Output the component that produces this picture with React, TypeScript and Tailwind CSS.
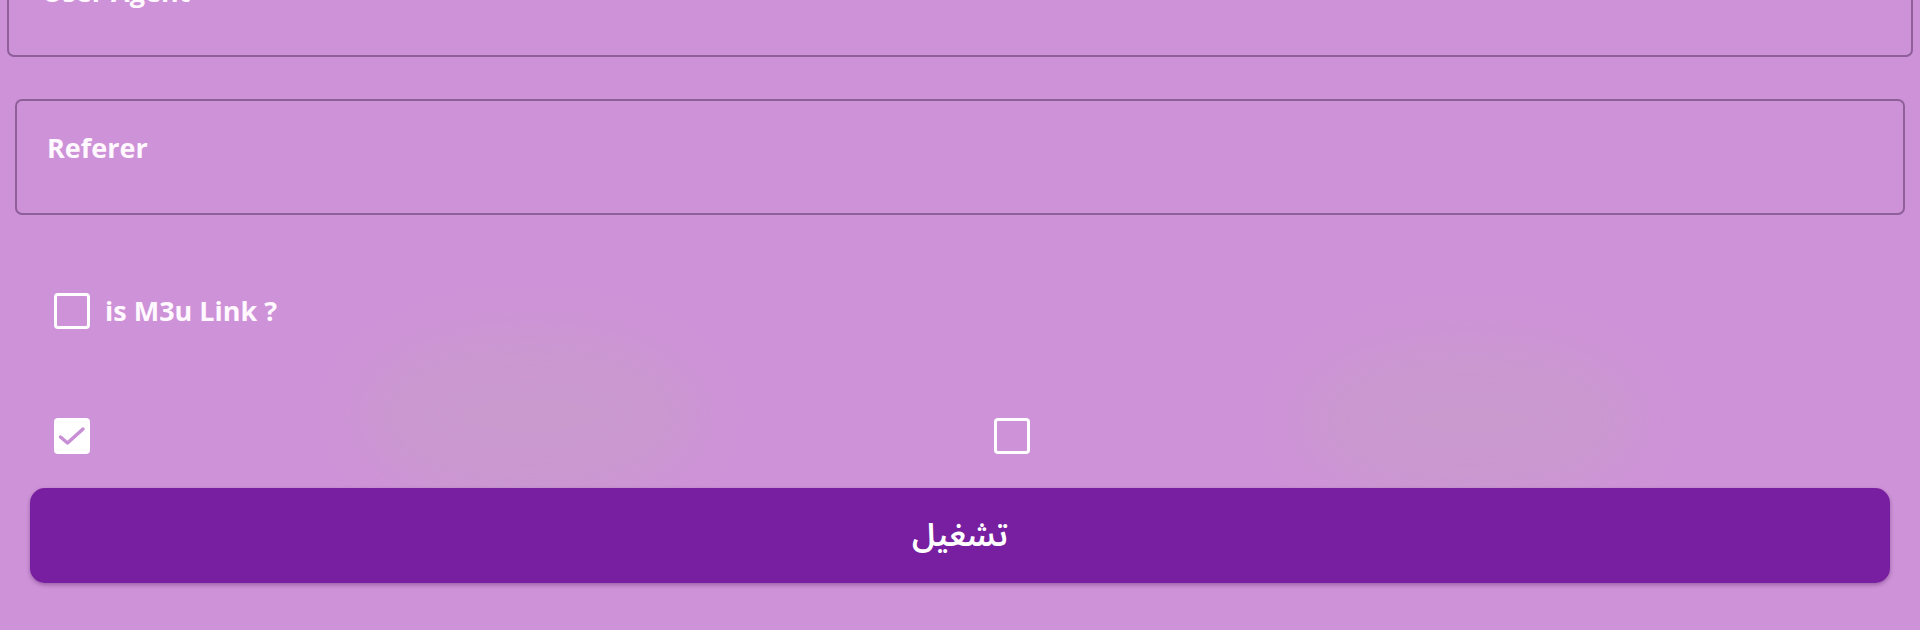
import React from "react";

const font = { fontFamily: '"Open Sans", "Noto Sans", sans-serif' };

function Box({ checked }: { checked?: boolean }) {
  if (checked) {
    return (
      <div className="w-[36px] h-[36px] rounded-[4px] bg-white flex items-center justify-center shrink-0">
        <svg width="36" height="36" viewBox="0 0 36 36">
          <path d="M6.5 19 L13.5 25 L29 11" fill="none" stroke="#c98fd6" strokeWidth="3.5" strokeLinecap="round" strokeLinejoin="round" />
        </svg>
      </div>
    );
  }
  return <div className="w-[36px] h-[36px] rounded-[4px] border-[3px] border-white shrink-0" />;
}

export default function App() {
  return (
    <div className="relative h-[630px] w-[1920px] overflow-hidden bg-[#ce92d8] text-[#fff8ff]" style={font}>
      <div className="pointer-events-none absolute left-[360px] top-[330px] w-[340px] h-[170px] rounded-[50%] bg-[#c6a2c4] opacity-45 blur-[28px]" />
      <div className="pointer-events-none absolute left-[1300px] top-[340px] w-[340px] h-[160px] rounded-[50%] bg-[#c6a2c4] opacity-45 blur-[28px]" />
      <div className="relative mt-[-57px] mx-[7px] h-[114px] border-2 border-[#8f5f9a] rounded-[7px] pl-[33px] pt-[31px]">
        <div className="text-[27px] leading-[32px] font-bold">User Agent</div>
      </div>
      <div className="relative mt-[42px] mx-[15px] h-[116px] border-2 border-[#8f5f9a] rounded-[7px] pl-[30px] pt-[31px]">
        <div className="text-[27px] leading-[32px] font-bold">Referer</div>
      </div>
      <div className="relative mt-[78px] pl-[54px] flex items-center gap-[15px] h-[36px]">
        <Box />
        <span className="text-[27px] leading-[36px] font-bold">is M3u Link ?</span>
      </div>
      <div className="relative mt-[89px] pl-[54px] flex h-[36px]">
        <div className="w-[940px]">
          <Box checked />
        </div>
        <Box />
      </div>
      <div className="relative z-10 mt-[34px] mx-[30px] h-[95px] rounded-[15px] bg-[#781ea0] shadow-[0_2px_4px_rgba(60,0,80,0.35)] flex items-center justify-center">
        <span
          dir="rtl"
          className="text-[32px] font-semibold text-white"
          style={{ fontFamily: '"Noto Sans Arabic", "Noto Sans", "DejaVu Sans", sans-serif' }}
        >
          تشغيل
        </span>
      </div>
    </div>
  );
}
